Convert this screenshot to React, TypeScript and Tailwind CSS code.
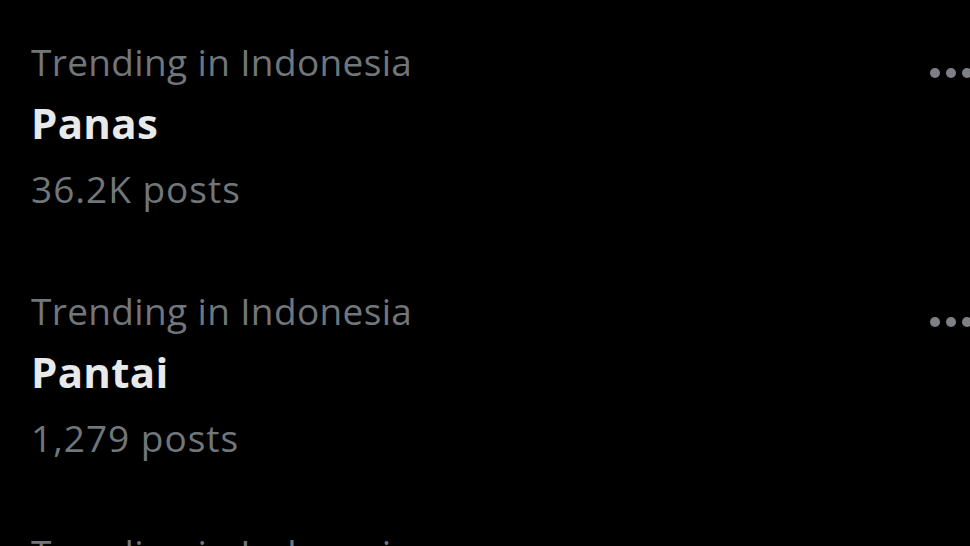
const trends = [
  { label: "Trending in Indonesia", name: "Panas", posts: "36.2K posts", h: "h-[249px]" },
  { label: "Trending in Indonesia", name: "Pantai", posts: "1,279 posts", h: "h-[242px]" },
  { label: "Trending in Indonesia", name: "Pantun", posts: "2,113 posts", h: "h-[249px]" },
];

function MoreDots() {
  return (
    <div className="mr-[-2px] mt-[37px] flex h-[10px] items-center gap-[6px] self-start">
      <span className="h-[10px] w-[10px] rounded-full bg-[#7d8185]" />
      <span className="h-[10px] w-[10px] rounded-full bg-[#7d8185]" />
      <span className="h-[10px] w-[10px] rounded-full bg-[#7d8185]" />
    </div>
  );
}

export default function App() {
  return (
    <div
      className="h-[546px] w-[970px] overflow-hidden bg-black"
      style={{ fontFamily: '"Open Sans", "Noto Sans", sans-serif' }}
    >
      {trends.map((t) => (
        <div key={t.name} className={`flex ${t.h} shrink-0 justify-between pl-[31px] pt-[31px]`}>
          <div className="flex flex-col">
            <span className="h-[61px] text-[37px] leading-[61px] tracking-[0.35px] text-[#71767b]">{t.label}</span>
            <span className="h-[62px] text-[42px] font-bold leading-[62px] tracking-[0.3px] text-[#e7e9ea]">{t.name}</span>
            <span className="h-[70px] text-[37px] leading-[70px] tracking-[1px] text-[#71767b]">{t.posts}</span>
          </div>
          <MoreDots />
        </div>
      ))}
    </div>
  );
}
